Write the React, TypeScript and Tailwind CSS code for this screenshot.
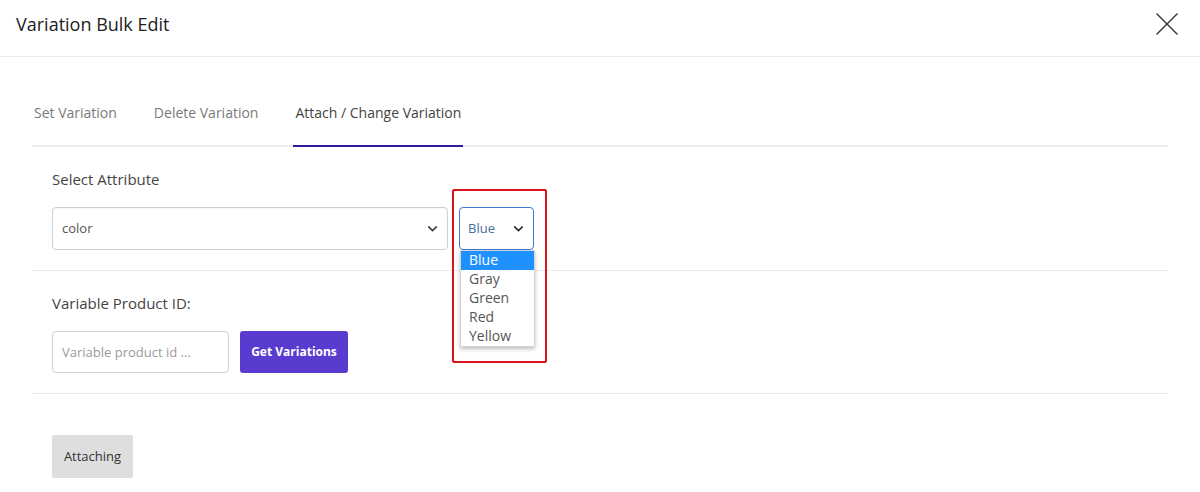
import React from "react";

const tabs = ["Set Variation", "Delete Variation", "Attach / Change Variation"];
const colors = ["Blue", "Gray", "Green", "Red", "Yellow"];

function Chevron({ className }: { className?: string }) {
  return (
    <svg viewBox="0 0 12 12" className={className} fill="none" stroke="currentColor" strokeWidth="1.5" strokeLinecap="round" strokeLinejoin="round">
      <path d="M2.5 4.5 6 8l3.5-3.5" />
    </svg>
  );
}

export default function App() {
  return (
    <div className="w-[1200px] h-[492px] bg-white overflow-hidden text-[#444]" style={{ fontFamily: '"Open Sans", "Noto Sans", sans-serif' }}>
      {/* Header */}
      <div className="h-[57px] border-b border-[#ececec] flex items-center justify-between pl-[16px] pr-[21px]">
        <h2 className="text-[18px] font-medium text-[#222] leading-none -mt-[9px]">Variation Bulk Edit</h2>
        <button className="w-[24px] h-[24px] text-[#333] -mt-[9px]">
          <svg viewBox="0 0 24 24" className="w-[24px] h-[24px]" stroke="currentColor" strokeWidth="1.4" fill="none">
            <path d="M1.5 1.5 22.5 22.5M22.5 1.5 1.5 22.5" />
          </svg>
        </button>
      </div>

      <div className="px-[32px] pt-[33px]">
        {/* Tabs */}
        <div className="flex border-b-2 border-[#ededed]">
          {tabs.map((t, i) => (
            <div
              key={t}
              className={`px-[2px] pt-[13px] pb-[22px] text-[14px] leading-[20px] -mb-[2px] border-b-2 ${
                i === 0 ? "" : "ml-[33px]"
              } ${i === 2 ? "border-[#2b1f9e] text-[#444]" : "border-transparent text-[#7a7a7a]"}`}
            >
              {t}
            </div>
          ))}
        </div>

        {/* Select Attribute */}
        <div className="px-[20px] pt-[21px] pb-[20px] border-b border-[#ececec]">
          <div className="text-[15px] leading-[22px] text-[#444]">Select Attribute</div>
          <div className="flex gap-[11px] mt-[17px]">
            <div className="w-[396px] h-[43px] border border-[#cfcfcf] rounded-[4px] flex items-center justify-between pl-[9px] pr-[8px] shadow-[inset_0_1px_1px_rgba(0,0,0,0.04)]">
              <span className="text-[13px] text-[#555]">color</span>
              <Chevron className="w-[13px] h-[13px] text-[#444]" />
            </div>
            <div className="relative">
              <div className="w-[75px] h-[43px] border border-[#3a7bd5] rounded-[4px] flex items-center justify-between pl-[8px] pr-[8px]">
                <span className="text-[13px] text-[#4b6f9a]">Blue</span>
                <Chevron className="w-[13px] h-[13px] text-[#333]" />
              </div>
              <div className="absolute left-[1px] top-[43px] w-[75px] bg-white border border-[#d4d4d4] shadow-[0_2px_4px_rgba(0,0,0,0.25)] z-10">
                {colors.map((c, i) => (
                  <div
                    key={c}
                    className={`h-[19px] leading-[18px] pl-[8px] text-[14px] ${
                      i === 0 ? "bg-[#1e90ff] text-white" : "text-[#555]"
                    }`}
                  >
                    {c}
                  </div>
                ))}
              </div>
              <div className="absolute -left-[7px] -top-[18px] w-[95px] h-[174px] border-2 border-[#d9141e] rounded-[2px] pointer-events-none z-20" />
            </div>
          </div>
        </div>

        {/* Variable Product ID */}
        <div className="px-[20px] pt-[21px] pb-[20px] border-b border-[#ececec]">
          <div className="text-[15px] leading-[22px] text-[#444]">Variable Product ID:</div>
          <div className="flex gap-[11px] mt-[17px]">
            <input
              placeholder="Variable product id ..."
              className="w-[177px] h-[42px] border border-[#cfcfcf] rounded-[4px] pl-[9px] text-[13px] text-[#555] placeholder:text-[#9a9a9a] outline-none"
            />
            <button className="w-[108px] h-[42px] bg-[#5a3bd0] rounded-[3px] text-white text-[12px] font-bold">
              Get Variations
            </button>
          </div>
        </div>

        {/* Attaching */}
        <div className="px-[20px] pt-[41px]">
          <button className="w-[81px] h-[43px] bg-[#dedede] rounded-[2px] text-[13px] text-[#333]">Attaching</button>
        </div>
      </div>
    </div>
  );
}
